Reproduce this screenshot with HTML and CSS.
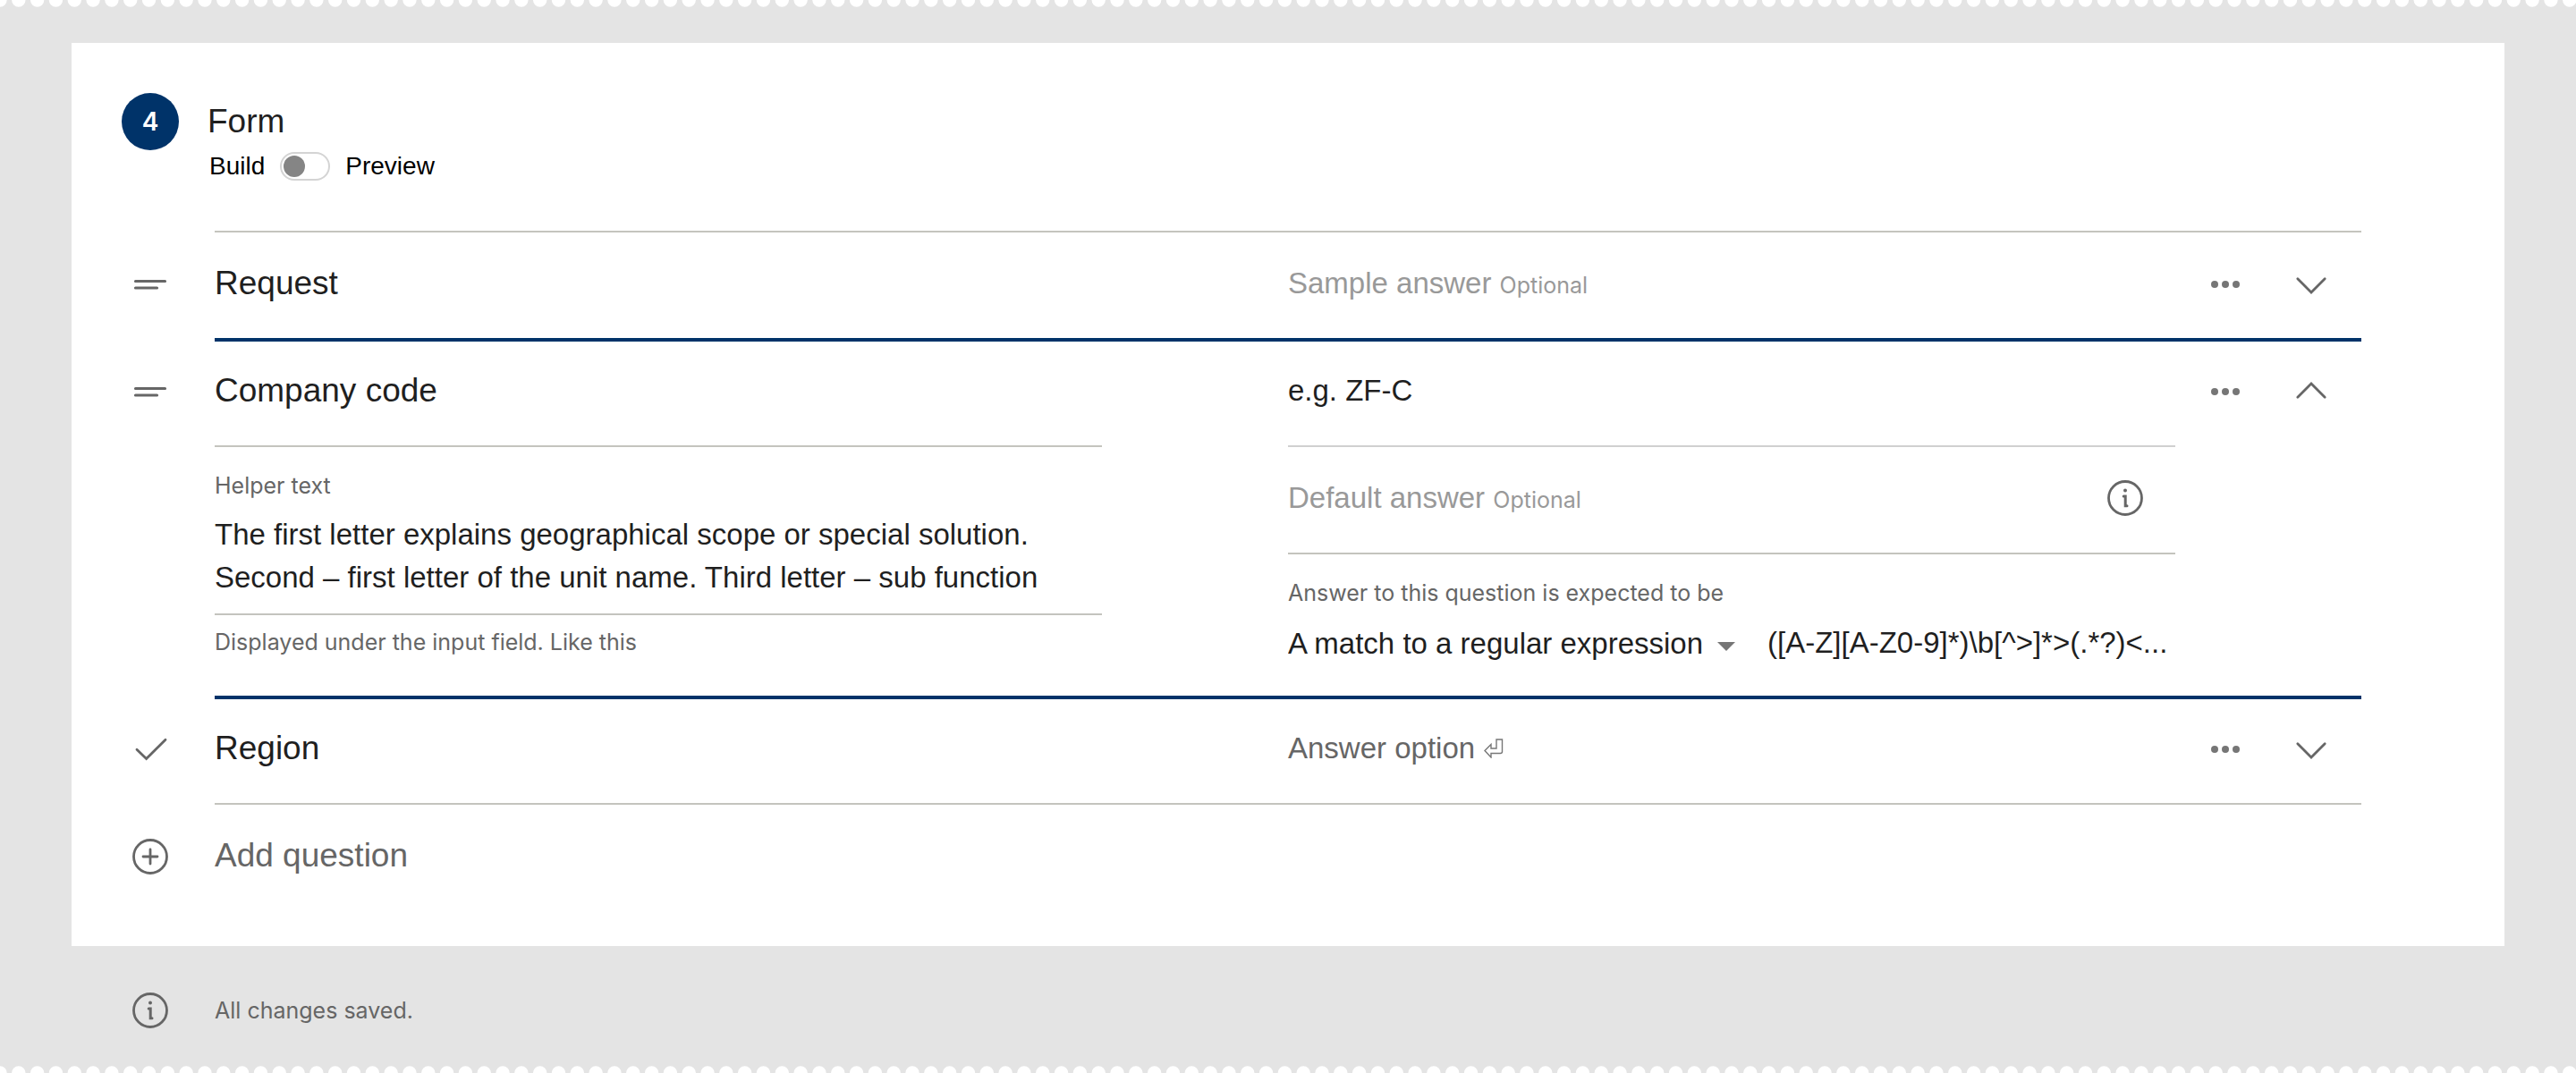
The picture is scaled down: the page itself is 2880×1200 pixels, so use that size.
FILE: index.html
```html
<!DOCTYPE html>
<html lang="en">
<head>
<meta charset="utf-8">
<meta name="viewport" content="width=device-width, initial-scale=1">
<title>Form builder</title>
<link rel="stylesheet" href="styles.css">
</head>
<body>
<svg class="sprite" aria-hidden="true">
  <symbol id="i-lines" viewBox="0 0 40 40"><path d="M3.500 16.500h33M3.500 24h24" stroke-width="3.200"/></symbol>
  <symbol id="i-check" viewBox="0 0 40 40"><path d="M5 20.200 15.600 30.600 37 9.200" stroke-width="2.800"/></symbol>
  <symbol id="i-plus" viewBox="0 0 40 40"><circle cx="20" cy="20" r="18.500" stroke-width="2.800"/><path d="M12 20h16M20 12v16" stroke-width="2.800"/></symbol>
  <symbol id="i-info" viewBox="0 0 40 40"><circle cx="20" cy="20" r="18.500" stroke-width="2.800"/><circle cx="20" cy="11.600" r="2" fill="currentColor" stroke="none"/><path d="M18.200 18h2v10.800h1.800" stroke-width="3"/></symbol>
  <symbol id="i-dots" viewBox="0 0 40 40"><g fill="#767676" stroke="none"><circle cx="8" cy="20" r="4"/><circle cx="20" cy="20" r="4"/><circle cx="32" cy="20" r="4"/></g></symbol>
  <symbol id="i-down" viewBox="0 0 40 40"><path d="M4.800 13.800 20 29 35.200 13.800" stroke-width="2.800"/></symbol>
  <symbol id="i-up" viewBox="0 0 40 40"><path d="M4.800 26.200 20 11 35.200 26.200" stroke-width="2.800"/></symbol>
</svg>

<svg class="edge" aria-hidden="true"><line x1="0" y1="0" x2="100%" y2="0"/></svg>

<main class="page">
  <section class="card">
    <header class="head">
      <span class="badge">4</span>
      <div class="head-body">
        <h1 class="title">Form</h1>
        <div class="mode">
          <label for="mode">Build</label>
          <input class="switch" id="mode" type="checkbox" aria-label="Preview mode">
          <label for="mode">Preview</label>
        </div>
      </div>
    </header>

    <div class="question">
      <button class="handle" aria-label="Move question"><svg class="icon"><use href="#i-lines"/></svg></button>
      <div class="body">
        <div class="half"><div class="line"><input class="field name" aria-label="Question" value="Request"></div></div>
        <div class="half">
          <div class="line">
            <label class="hint" for="sample1">Sample answer <span class="note">Optional</span></label>
            <input class="field" id="sample1">
          </div>
        </div>
        <div class="actions">
          <button class="action" aria-label="More"><svg class="icon"><use href="#i-dots"/></svg></button>
          <button class="action" aria-label="Expand"><svg class="icon"><use href="#i-down"/></svg></button>
        </div>
      </div>
    </div>

    <div class="question">
      <button class="handle" aria-label="Move question"><svg class="icon"><use href="#i-lines"/></svg></button>
      <div class="body navy">
        <div class="half">
          <div class="line"><input class="field name" aria-label="Question" value="Company code"></div>
          <div class="detail">
            <label class="small" for="helper">Helper text</label>
            <textarea class="field area" id="helper" rows="2">The first letter explains geographical scope or special solution. Second – first letter of the unit name. Third letter – sub function</textarea>
            <p class="small under">Displayed under the input field. Like this</p>
          </div>
        </div>
        <div class="half">
          <div class="line"><input class="field" aria-label="Sample answer" value="e.g. ZF-C"></div>
          <div class="line ruled">
            <label class="hint" for="default2">Default answer <span class="note">Optional</span></label>
            <input class="field" id="default2">
            <button class="help" aria-label="About default answers"><svg class="icon"><use href="#i-info"/></svg></button>
          </div>
          <div class="detail">
            <label class="small" for="expect">Answer to this question is expected to be</label>
            <div class="match">
              <div class="picker">
                <select class="field select" id="expect"><option>A match to a regular expression</option></select>
                <svg class="caret" viewBox="0 0 20 10" aria-hidden="true"><path d="M0 0h20L10 10z"/></svg>
              </div>
              <input class="field" aria-label="Regular expression" value="([A-Z][A-Z0-9]*)\b[^&gt;]*&gt;(.*?)&lt;...">
            </div>
          </div>
        </div>
        <div class="actions">
          <button class="action" aria-label="More"><svg class="icon"><use href="#i-dots"/></svg></button>
          <button class="action" aria-label="Collapse"><svg class="icon"><use href="#i-up"/></svg></button>
        </div>
      </div>
    </div>

    <div class="question">
      <span class="handle"><svg class="icon"><use href="#i-check"/></svg></span>
      <div class="body navy">
        <div class="half"><div class="line"><input class="field name" aria-label="Question" value="Region"></div></div>
        <div class="half">
          <div class="line">
            <label class="hint dark" for="option3">Answer option</label>
            <svg class="enter" viewBox="0 0 22 22" aria-hidden="true"><path d="M14 1h6.500v13.500q0 2-2 2H8v4.500L1 13.500 8 6.500v4.500h6z"/></svg>
            <input class="field" id="option3">
          </div>
        </div>
        <div class="actions">
          <button class="action" aria-label="More"><svg class="icon"><use href="#i-dots"/></svg></button>
          <button class="action" aria-label="Expand"><svg class="icon"><use href="#i-down"/></svg></button>
        </div>
      </div>
    </div>

    <div class="question">
      <span class="handle"><svg class="icon"><use href="#i-plus"/></svg></span>
      <div class="body"><button class="add">Add question</button></div>
    </div>
  </section>

  <footer class="status">
    <svg class="icon" aria-hidden="true"><use href="#i-info"/></svg>
    <p class="small">All changes saved.</p>
  </footer>
</main>

<svg class="edge" aria-hidden="true"><line x1="0" y1="8" x2="100%" y2="8"/></svg>
</body>
</html>
```

FILE: styles.css
```css
* { box-sizing: border-box; }

body {
  margin: 0;
  min-height: 100vh;
  display: flex;
  flex-direction: column;
  background: #e4e4e4;
  color: #1f1f1f;
  font-family: "Liberation Sans", Arial, sans-serif;
  font-size: 33px;
}

h1, p { margin: 0; font-weight: 400; }

button, input, select, textarea {
  font: inherit;
  color: inherit;
  background: none;
  border: 0;
  padding: 0;
  margin: 0;
}

button, select, label { cursor: pointer; }

.sprite { display: none; }

/* perforated page edge */
.edge { display: block; width: 100%; height: 8px; flex: none; }
.edge line {
  stroke: #fff;
  stroke-width: 15.400;
  stroke-linecap: round;
  stroke-dasharray: 0 20.817;
}

.page { flex: 1; padding: 40px 80px 0; }

.card { background: #fff; padding: 56px 160px 40px 56px; }

.icon {
  display: block;
  flex: none;
  width: 40px;
  height: 40px;
  color: #666;
  fill: none;
  stroke: currentColor;
  stroke-linecap: round;
}

.head { display: flex; gap: 32px; height: 154px; }
.badge {
  flex: none;
  width: 64px;
  height: 64px;
  border-radius: 50%;
  background: #003369;
  color: #fff;
  font: 600 28px/64px Inter, sans-serif;
  text-align: center;
}
.title { font-size: 37px; line-height: 64px; }
.mode {
  display: flex;
  align-items: center;
  gap: 17px;
  padding-left: 2px;
  color: #000;
  font-size: 28px;
  line-height: 36px;
}
.switch {
  appearance: none;
  width: 56px;
  height: 32px;
  padding: 2px;
  border: 2px solid #d4d4d4;
  border-radius: 16px;
}
.switch::before {
  content: "";
  display: block;
  width: 24px;
  height: 24px;
  border-radius: 50%;
  background: #858585;
}
.switch:checked::before { margin-left: auto; }

.question { display: flex; gap: 40px; }
.handle {
  flex: none;
  display: flex;
  align-items: center;
  justify-content: center;
  width: 64px;
  height: 120px;
}
.body {
  flex: 1;
  display: flex;
  gap: 208px;
  border-top: 2px solid #c4c4be;
}
.body.navy { border-top: 4px solid #003369; }
.half { flex: 1; min-width: 0; }
.line { display: flex; align-items: center; height: 118px; padding-bottom: 4px; }
.navy .line:first-child { height: 116px; padding-bottom: 6px; }
.actions { display: flex; flex: none; width: 192px; height: 116px; margin: 0 8px 0 -200px; }
.navy .actions { height: 112px; }
.action { display: flex; align-items: center; justify-content: center; width: 96px; }

.field { flex: 1; min-width: 0; width: 100%; outline: 0; }
.name, .add { font-size: 37px; }
.add { height: 114px; color: #666; }
.hint { flex: none; color: #999; }
.hint.dark { color: #666; }
.note, .small { font-family: Inter, sans-serif; font-size: 25px; }
.small { display: block; color: #666; line-height: 36px; }
.enter { flex: none; width: 22px; height: 22px; margin-left: 10px; fill: none; stroke: #777; stroke-width: 1.400; }
.help { margin-right: 36px; }

.ruled { border-top: 2px solid #d0d0d0; height: 120px; }
.detail { border-top: 2px solid #c4c4be; padding-top: 25px; }
.area {
  display: block;
  height: 127px;
  padding: 13px 0 16px;
  border-bottom: 2px solid #c4c4be;
  line-height: 48px;
  resize: none;
  overflow: hidden;
}
.under { padding-top: 12px; }
.match { display: flex; align-items: center; gap: 36px; height: 76px; margin-bottom: 21px; }
.picker { display: grid; align-items: center; justify-items: end; }
.select { grid-area: 1 / 1; appearance: none; padding-right: 34px; }
.caret { grid-area: 1 / 1; width: 20px; height: 10px; margin-top: 8px; fill: #767676; pointer-events: none; }

.status { display: flex; align-items: center; gap: 52px; padding: 52px 68px 40px; }
```
